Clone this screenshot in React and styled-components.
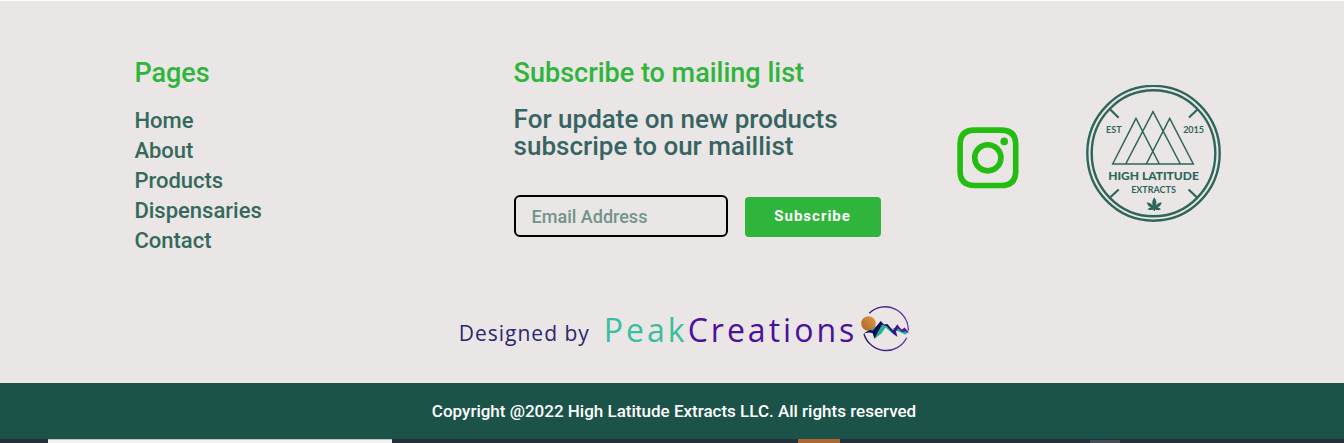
import React from 'react';
import styled, { createGlobalStyle } from 'styled-components';

const GlobalStyle = createGlobalStyle`
  *, *::before, *::after { box-sizing: border-box; }
  body { margin: 0; background: #eae6e5; font-family: Roboto, "Liberation Sans", sans-serif; }
`;

const Footer = styled.footer`
  border-top: 1px solid #fff;
  background: #eae6e5;
`;

const Columns = styled.div`
  display: grid;
  grid-template-columns: minmax(0, 379fr) minmax(0, 443fr) minmax(0, 129fr) minmax(0, 137fr);
  padding: 56px 9% 0 10%;
`;

const Title = styled.h2`
  margin: 0;
  font-size: 27px;
  line-height: 33px;
  font-weight: 500;
  color: #2fb53c;
`;

const PageLinks = styled.ul`
  margin: 16px 0 0;
  padding: 0;
  list-style: none;
`;

const PageLink = styled.a`
  display: block;
  font-size: 22px;
  line-height: 30px;
  font-weight: 500;
  color: #35695c;
  text-decoration: none;
`;

const Lead = styled.p`
  margin: 16px 0 0;
  max-width: 360px;
  font-size: 26px;
  line-height: 27px;
  font-weight: 500;
  color: #376462;
`;

const Form = styled.form`
  display: flex;
  align-items: flex-end;
  gap: 17px;
  margin-top: 35px;
`;

const EmailInput = styled.input`
  width: 214px;
  height: 42px;
  padding: 0 16px;
  border: 2px solid #000;
  border-radius: 6px;
  background: transparent;
  font: 500 18px Roboto, sans-serif;
  color: #35695c;
  &::placeholder { color: #72938a; opacity: 1; }
`;

const SubscribeButton = styled.button`
  width: 136px;
  height: 40px;
  padding: 0 0 2px;
  border: 0;
  border-radius: 4px;
  background: #2fb53c;
  color: #fff;
  font: 700 15px Roboto, sans-serif;
  letter-spacing: 1px;
`;

const SocialLink = styled.a`
  display: block;
  margin-top: 70px;
  line-height: 0;
`;

const SealLink = styled.a`
  display: block;
  margin-top: 28px;
  line-height: 0;
`;

const Credit = styled.a`
  display: flex;
  align-items: center;
  justify-content: center;
  padding: 50px 0 30px 24px;
  font-family: "Open Sans", "Noto Sans", sans-serif;
  text-decoration: none;
`;

const CreditLabel = styled.span`
  margin-right: 14px;
  padding-top: 6px;
  font-size: 21px;
  line-height: 28px;
  letter-spacing: 1px;
  color: #2c2670;
`;

const Brand = styled.span`
  font-size: 32px;
  line-height: 44px;
  letter-spacing: 3px;
  color: ${(p) => p.$color};
`;

const BrandName = styled.span`
  display: flex;
  margin-right: 4px;
`;

const Copyright = styled.div`
  padding: 16px 16px 16px 20px;
  background: #1c5349;
  color: #fff;
  text-align: center;
  font-size: 17px;
  line-height: 24px;
  font-weight: 500;
`;

const Taskbar = styled.div`
  display: flex;
  height: 4px;
  padding-left: 48px;
  background: #24303a;
`;

const TaskItem = styled.div`
  width: ${(p) => p.$width}px;
  margin-right: ${(p) => p.$gap}px;
  border-top: ${(p) => p.$edge ? `1px solid ${p.$edge}` : '0'};
  background: ${(p) => p.$color};
`;

function InstagramIcon() {
  return (
    <svg width="62" height="62" viewBox="0 0 62 62" fill="none" stroke="#24bc10" strokeWidth="5.6" aria-hidden="true">
      <path d="M17.500 3.100H44.300Q58.700 3.100 58.700 17.500V44.100Q58.700 58.500 44.300 58.500H17.500Q3.100 58.500 3.100 44.100V17.500Q3.100 3.100 17.500 3.100Z" />
      <circle cx="30.8" cy="30.8" r="13.1" />
      <circle cx="47.2" cy="14.4" r="3.8" fill="#24bc10" stroke="none" />
    </svg>
  );
}

function Seal() {
  return (
    <svg width="135" height="137" viewBox="0 0 135 137" fill="none" stroke="#2f665b" role="img" aria-label="High Latitude Extracts">
      <ellipse cx="67.5" cy="68.3" rx="66.2" ry="67.4" strokeWidth="2.4" />
      <ellipse cx="67.5" cy="68.3" rx="61.8" ry="63" strokeWidth="2.4" />
      <path d="M23.7 24l9 8.7M111.7 24.3l-8.7 8.2M23.7 112.7l9-8.2M111.3 112.7l-8.7-8.2" strokeWidth="2.2" />
      <path d="M50 33.3L26.7 79H73.3ZM67 26.7L39.7 79H94.3ZM83.7 33.3L60.3 79H107.3Z" strokeWidth="1.5" />
      <g fill="#2f665b" stroke="none" fontFamily="Lato, sans-serif" textAnchor="middle">
        <text x="27.8" y="48.4" fontSize="9" fontWeight="700">EST</text>
        <text x="107.6" y="48.4" fontSize="9" fontWeight="700">2015</text>
        <text x="67.5" y="94.8" fontSize="12" fontWeight="900">HIGH LATITUDE</text>
        <text x="67.5" y="107.8" fontSize="9" fontWeight="700">EXTRACTS</text>
        <path d="M68.300 112.500Q71.300 116 70 120.500Q72 117.200 76 117.500Q75 121 71.500 122.500Q74 122.500 75 124.200Q72 125.800 69 124.500V126H67.600V124.500Q64.600 125.800 61.600 124.200Q62.600 122.500 65.100 122.500Q61.600 121 60.600 117.500Q64.600 117.200 66.600 120.500Q65.300 116 68.300 112.500Z" />
      </g>
    </svg>
  );
}

function PeakIcon() {
  return (
    <svg width="48" height="47" viewBox="0 0 48 47" fill="none" aria-hidden="true">
      <defs>
        <linearGradient id="ring"><stop stopColor="#211a60" /><stop offset="1" stopColor="#6b39b4" /></linearGradient>
        <linearGradient id="ridge"><stop offset=".4" stopColor="#120b5a" /><stop offset=".8" stopColor="#5115a0" /></linearGradient>
        <linearGradient id="sun" x1="1" y1="0" x2="0" y2="1"><stop stopColor="#e39b4c" /><stop offset="1" stopColor="#a9621f" /></linearGradient>
      </defs>
      <path d="M8.300 7.300A23 23 0 0 1 47.300 24.500M45.700 31.700A23 23 0 0 1 3 28" stroke="url(#ring)" strokeWidth="1.400" />
      <circle cx="7.500" cy="17.500" r="7.300" fill="url(#sun)" />
      <path d="M3 28L8.500 24.500L12 25L15 26L13.500 32.700L20.500 27.500L24.500 21.500L34.500 30L35 26L30 22L44 28.500L47.500 26.500L37 21L30 23L20 17Z" fill="#20b594" />
      <path d="M2.500 27.500L8.500 24L12 24.500L19.700 15L23 18.500L26.500 18L32 24.500L36.300 18.300L40.500 24L43.500 21.500L48 26.500L44 25.500L41 26L37 22.500L35 25.500L36.500 31L31.500 27L26 20.500L21 18.500L17.500 25L13.500 32.700L11.500 27L8 26.500Z" fill="url(#ridge)" />
    </svg>
  );
}

const pages = ['Home', 'About', 'Products', 'Dispensaries', 'Contact'];

export default function App() {
  return (
    <>
      <GlobalStyle />
      <Footer>
        <Columns>
          <nav aria-label="Pages">
            <Title>Pages</Title>
            <PageLinks>
              {pages.map((page) => (
                <li key={page}><PageLink href={`#${page.toLowerCase()}`}>{page}</PageLink></li>
              ))}
            </PageLinks>
          </nav>
          <section>
            <Title>Subscribe to mailing list</Title>
            <Lead>For update on new products subscripe to our maillist</Lead>
            <Form>
              <EmailInput type="email" placeholder="Email Address" aria-label="Email Address" />
              <SubscribeButton type="button">Subscribe</SubscribeButton>
            </Form>
          </section>
          <SocialLink href="#instagram" aria-label="Instagram"><InstagramIcon /></SocialLink>
          <SealLink href="#home"><Seal /></SealLink>
        </Columns>
        <Credit href="#peakcreations">
          <CreditLabel>Designed by</CreditLabel>
          <BrandName>
            <Brand $color="#38bf9f">Peak</Brand>
            <Brand $color="#4b109c">Creations</Brand>
          </BrandName>
          <PeakIcon />
        </Credit>
        <Copyright>Copyright @2022 High Latitude Extracts LLC. All rights reserved</Copyright>
      </Footer>
      <Taskbar>
        <TaskItem $width={344} $gap={406} $color="#f3f2f1" $edge="#c4c0bf" />
        <TaskItem $width={42} $gap={250} $color="#ac682e" />
        <TaskItem $width={30} $gap={0} $color="#464d54" $edge="#24303a" />
      </Taskbar>
    </>
  );
}
